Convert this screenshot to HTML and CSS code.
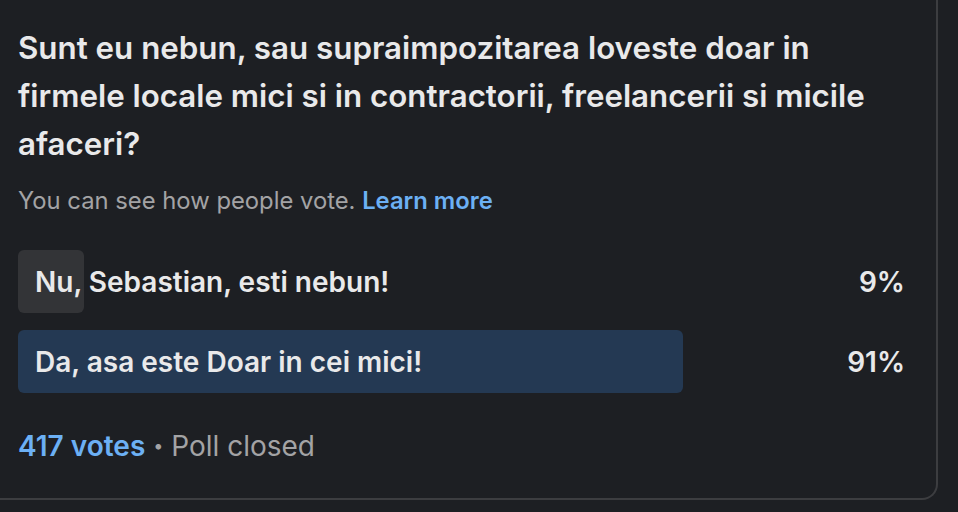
FILE: index.html
```html
<!DOCTYPE html>
<html lang="en">
<head>
    <meta charset="UTF-8">
    <meta name="viewport" content="width=device-width, initial-scale=1.0">
    <title>Poll</title>
    <link rel="stylesheet" href="styles.css">
</head>
<body>
    <div class="card">
        <h2 class="question">Sunt eu nebun, sau supraimpozitarea loveste doar in firmele locale mici si in contractorii, freelancerii si micile afaceri?</h2>
        <p class="note">You can see how people vote. <a href="#">Learn more</a></p>
        <ul class="options">
            <li class="option">
                <div class="track">
                    <div class="bar" style="width: 9%"></div>
                    <span class="label">Nu, Sebastian, esti nebun!</span>
                </div>
                <span class="percent">9%</span>
            </li>
            <li class="option win">
                <div class="track">
                    <div class="bar" style="width: 91%"></div>
                    <span class="label">Da, asa este Doar in cei mici!</span>
                </div>
                <span class="percent">91%</span>
            </li>
        </ul>
        <p class="footer"><a href="#">417 votes</a> <span class="dot">•</span> Poll closed</p>
    </div>
</body>
</html>
```

FILE: styles.css
```css
body {
    margin: 0;
    background: #1d1f23;
    font-family: Inter, 'Noto Sans', sans-serif;
    color: #e9e9ea;
}
.card {
    box-sizing: border-box;
    width: 938px;
    height: 500px;
    padding: 24px 31px 0 18px;
    border-right: 2px solid #3c3d40;
    border-bottom: 2px solid #3c3d40;
    border-bottom-right-radius: 16px;
}
.question {
    margin: 0;
    font-size: 31.3px;
    line-height: 48px;
    font-weight: 600;
    color: #e9e9ea;
}
.note {
    margin: 17px 0 0;
    font-size: 23.8px;
    line-height: 32px;
    color: #a3a3a5;
}
.note a {
    color: #6cb0f4;
    font-weight: 600;
    text-decoration: none;
}
.options {
    list-style: none;
    margin: 33px 0 0;
    padding: 0;
    display: flex;
    flex-direction: column;
    gap: 17px;
}
.option {
    display: flex;
    align-items: center;
}
.track {
    position: relative;
    width: 731px;
    height: 63px;
    display: flex;
    align-items: center;
}
.bar {
    position: absolute;
    left: 0;
    top: 0;
    bottom: 0;
    background: #333437;
    border-radius: 6px;
}
.win .bar {
    background: #243953;
}
.label {
    position: relative;
    padding-left: 17px;
    font-size: 28px;
    font-weight: 600;
    white-space: nowrap;
}
.percent {
    margin-left: auto;
    font-size: 28px;
    font-weight: 600;
}
.footer {
    margin: 35px 0 0;
    font-size: 28px;
    line-height: 36px;
    color: #a3a3a5;
}
.footer a {
    color: #6cb0f4;
    font-weight: 600;
    text-decoration: none;
}
.dot {
    font-size: 18px;
    vertical-align: 4px;
}
```
